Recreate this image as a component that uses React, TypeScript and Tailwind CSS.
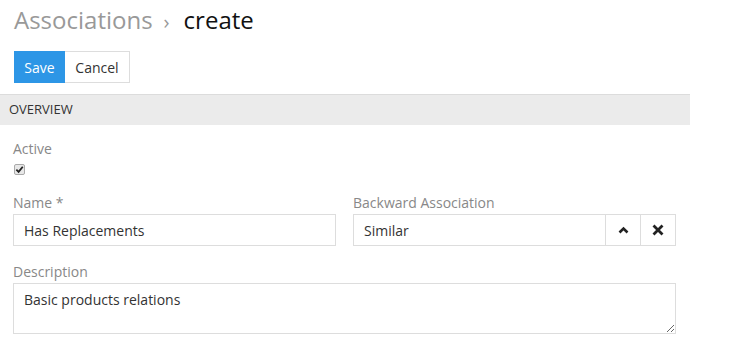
import React from 'react';

export default function App() {
  return (
    <div className="min-h-screen bg-white font-['Open_Sans',sans-serif] text-[#333]">
      {/* Header */}
      <div className="px-[14px] pt-[5px]">
        <h1 className="text-[24px] leading-[30px] font-normal">
          <span className="text-[#999]">Associations</span>
          <span className="text-[#999] ml-[11px] mr-[14px] text-[20px]">›</span>
          <span className="text-[#111]">create</span>
        </h1>
        <div className="flex mt-[14px]">
          <button className="h-[32px] w-[51px] bg-[#2d96e6] text-white text-[14px] border border-[#2d96e6]">
            Save
          </button>
          <button className="h-[32px] w-[65px] bg-white text-[#333] text-[14px] border border-[#ddd] border-l-0">
            Cancel
          </button>
        </div>
      </div>

      {/* Panel */}
      <div className="w-[690px] mt-[11px]">
        <div className="h-[31px] bg-[#ebebeb] border-t border-[#dcdcdc] px-[9px] flex items-center text-[13px] text-[#333]">
          OVERVIEW
        </div>

        <div className="pl-[13px] pr-[14px] pt-[15px]">
          <div className="text-[14px] leading-[18px] text-[#888]">Active</div>
          <div className="mt-[6px] ml-[1px] w-[11px] h-[11px] border border-[#aaa] rounded-[2px] bg-[#e8e8e8] flex items-center justify-center">
            <svg width="9" height="9" viewBox="0 0 10 10">
              <path d="M1.5 5.2 L4 7.6 L8.6 2" stroke="#222" strokeWidth="2" fill="none" />
            </svg>
          </div>

          <div className="grid grid-cols-2 gap-x-[17px] mt-[19px]">
            <div>
              <div className="text-[14px] leading-[18px] text-[#888]">Name *</div>
              <div className="mt-[2px] h-[32px] border border-[#ddd] flex items-center px-[10px] text-[14px] text-[#333]">
                Has Replacements
              </div>
            </div>
            <div>
              <div className="text-[14px] leading-[18px] text-[#888]">Backward Association</div>
              <div className="mt-[2px] h-[32px] border border-[#ddd] flex">
                <div className="flex-1 flex items-center px-[10px] text-[14px] text-[#333]">Similar</div>
                <div className="w-[35px] border-l border-[#ddd] flex items-center justify-center">
                  <svg width="11" height="8" viewBox="0 0 11 8">
                    <path d="M1.5 6.5 L5.5 2.5 L9.5 6.5" stroke="#222" strokeWidth="2.6" fill="none" />
                  </svg>
                </div>
                <div className="w-[35px] border-l border-[#ddd] flex items-center justify-center">
                  <svg width="12" height="12" viewBox="0 0 12 12">
                    <path d="M1.5 1.5 L10.5 10.5 M10.5 1.5 L1.5 10.5" stroke="#222" strokeWidth="2.8" fill="none" />
                  </svg>
                </div>
              </div>
            </div>
          </div>

          <div className="mt-[17px]">
            <div className="text-[14px] leading-[18px] text-[#888]">Description</div>
            <textarea
              className="mt-[2px] block w-full h-[51px] border border-[#ddd] px-[10px] py-[5px] text-[14px] text-[#333] outline-none"
              defaultValue="Basic products relations"
            />
          </div>
        </div>
      </div>
    </div>
  );
}
